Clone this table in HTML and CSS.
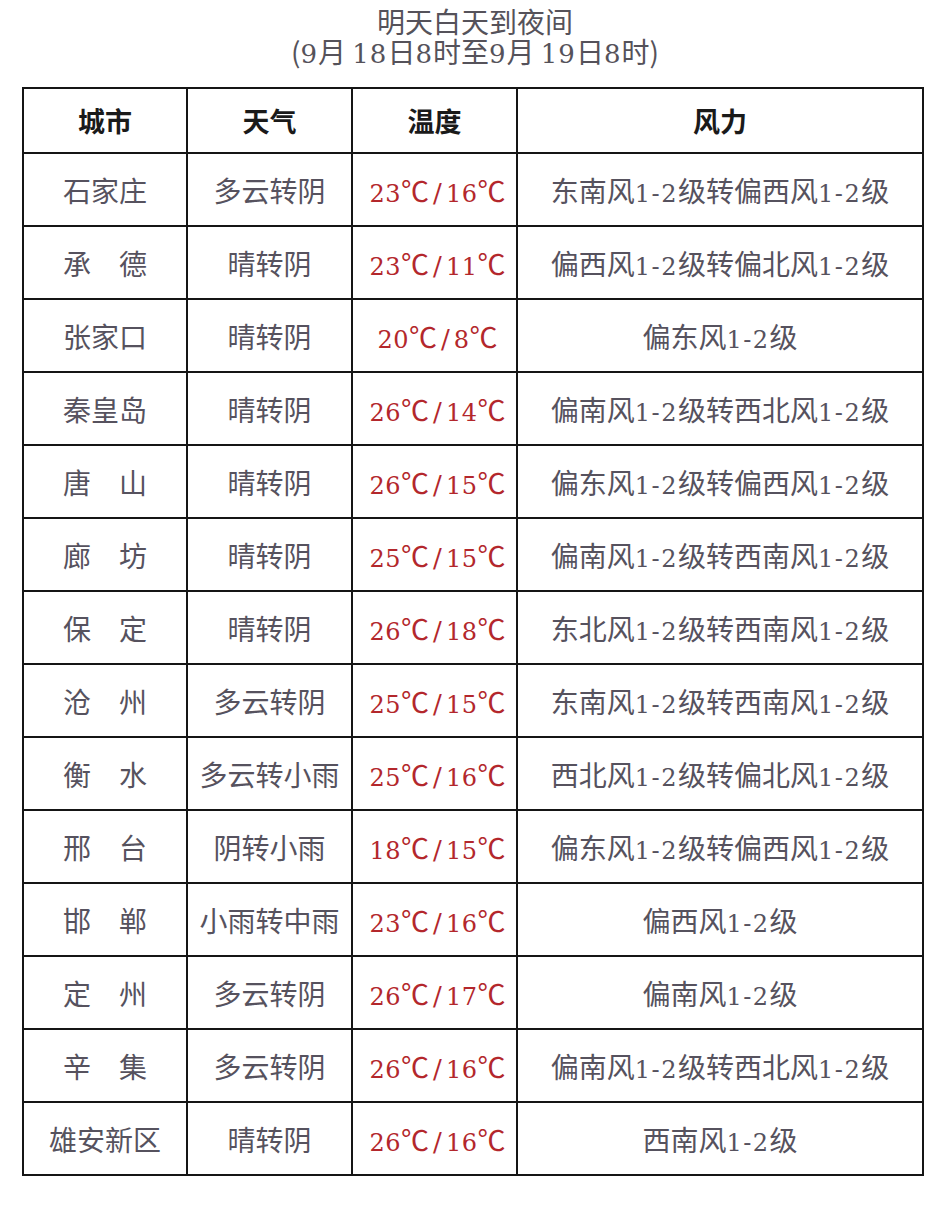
FILE: index.html
```html
<!DOCTYPE html>
<html lang="zh-CN">
<head>
<meta charset="utf-8">
<link rel="stylesheet" href="styles.css">
</head>
<body>
<div class="page">
  <div class="title">
    <div class="title-line">明天白天到夜间</div>
    <div class="title-line">(<span class="tn">9</span>月 <span class="tn">18</span>日<span class="tn">8</span>时至<span class="tn">9</span>月 <span class="tn">19</span>日<span class="tn">8</span>时)</div>
  </div>
  <table class="forecast">
    <thead>
      <tr><th class="c-city">城市</th><th class="c-wx">天气</th><th class="c-temp">温度</th><th class="c-wind">风力</th></tr>
    </thead>
    <tbody>
      <tr><td>石家庄</td><td>多云转阴</td><td class="temp"><span class="n">23</span>℃<span class="sl">/</span><span class="n">16</span>℃</td><td>东南风<span class="n">1-2</span>级转偏西风<span class="n">1-2</span>级</td></tr>
      <tr><td>承　德</td><td>晴转阴</td><td class="temp"><span class="n">23</span>℃<span class="sl">/</span><span class="n">11</span>℃</td><td>偏西风<span class="n">1-2</span>级转偏北风<span class="n">1-2</span>级</td></tr>
      <tr><td>张家口</td><td>晴转阴</td><td class="temp"><span class="n">20</span>℃<span class="sl">/</span><span class="n">8</span>℃</td><td>偏东风<span class="n">1-2</span>级</td></tr>
      <tr><td>秦皇岛</td><td>晴转阴</td><td class="temp"><span class="n">26</span>℃<span class="sl">/</span><span class="n">14</span>℃</td><td>偏南风<span class="n">1-2</span>级转西北风<span class="n">1-2</span>级</td></tr>
      <tr><td>唐　山</td><td>晴转阴</td><td class="temp"><span class="n">26</span>℃<span class="sl">/</span><span class="n">15</span>℃</td><td>偏东风<span class="n">1-2</span>级转偏西风<span class="n">1-2</span>级</td></tr>
      <tr><td>廊　坊</td><td>晴转阴</td><td class="temp"><span class="n">25</span>℃<span class="sl">/</span><span class="n">15</span>℃</td><td>偏南风<span class="n">1-2</span>级转西南风<span class="n">1-2</span>级</td></tr>
      <tr><td>保　定</td><td>晴转阴</td><td class="temp"><span class="n">26</span>℃<span class="sl">/</span><span class="n">18</span>℃</td><td>东北风<span class="n">1-2</span>级转西南风<span class="n">1-2</span>级</td></tr>
      <tr><td>沧　州</td><td>多云转阴</td><td class="temp"><span class="n">25</span>℃<span class="sl">/</span><span class="n">15</span>℃</td><td>东南风<span class="n">1-2</span>级转西南风<span class="n">1-2</span>级</td></tr>
      <tr><td>衡　水</td><td>多云转小雨</td><td class="temp"><span class="n">25</span>℃<span class="sl">/</span><span class="n">16</span>℃</td><td>西北风<span class="n">1-2</span>级转偏北风<span class="n">1-2</span>级</td></tr>
      <tr><td>邢　台</td><td>阴转小雨</td><td class="temp"><span class="n">18</span>℃<span class="sl">/</span><span class="n">15</span>℃</td><td>偏东风<span class="n">1-2</span>级转偏西风<span class="n">1-2</span>级</td></tr>
      <tr><td>邯　郸</td><td>小雨转中雨</td><td class="temp"><span class="n">23</span>℃<span class="sl">/</span><span class="n">16</span>℃</td><td>偏西风<span class="n">1-2</span>级</td></tr>
      <tr><td>定　州</td><td>多云转阴</td><td class="temp"><span class="n">26</span>℃<span class="sl">/</span><span class="n">17</span>℃</td><td>偏南风<span class="n">1-2</span>级</td></tr>
      <tr><td>辛　集</td><td>多云转阴</td><td class="temp"><span class="n">26</span>℃<span class="sl">/</span><span class="n">16</span>℃</td><td>偏南风<span class="n">1-2</span>级转西北风<span class="n">1-2</span>级</td></tr>
      <tr><td>雄安新区</td><td>晴转阴</td><td class="temp"><span class="n">26</span>℃<span class="sl">/</span><span class="n">16</span>℃</td><td>西南风<span class="n">1-2</span>级</td></tr>
    </tbody>
  </table>
</div>
</body>
</html>
```

FILE: styles.css
```css
html, body {
  margin: 0;
  padding: 0;
  background: #ffffff;
}

.page {
  width: 942px;
  height: 1218px;
  padding-top: 6px;
  box-sizing: border-box;
  font-family: "Noto Sans CJK SC", sans-serif;
  color: #56525e;
}

.title {
  text-align: center;
  font-size: 28px;
  color: #55525a;
  padding-left: 8px;
}

.title-line {
  height: 30px;
  line-height: 30px;
}

.title .tn {
  font-family: "DejaVu Serif", serif;
  font-size: 26px;
  line-height: 1;
  letter-spacing: 1px;
}

.forecast {
  margin: 21px 0 0 22px;
  width: 902px;
  border-collapse: collapse;
  table-layout: fixed;
}

.forecast th,
.forecast td {
  border: 2px solid #151515;
  text-align: center;
  vertical-align: middle;
  padding: 0;
  white-space: nowrap;
}

.forecast th {
  height: 63px;
  font-size: 27px;
  font-weight: bold;
  color: #1a1a1a;
}

.forecast td {
  height: 71px;
  font-size: 28px;
  color: #56525e;
}

.c-city { width: 162px; }
.c-wx, .c-temp { width: 163px; }
.c-wind { width: auto; }

.forecast .n {
  font-family: "DejaVu Serif", serif;
  font-size: 24px;
  letter-spacing: 1.5px;
}

.forecast td.temp {
  color: #b3272c;
  padding-left: 6px;
}

.forecast td.temp .n {
  font-size: 24px;
  letter-spacing: 0.5px;
}

.forecast .sl {
  font-family: "DejaVu Serif", serif;
  font-size: 26px;
  margin: 0 4px;
}
```
